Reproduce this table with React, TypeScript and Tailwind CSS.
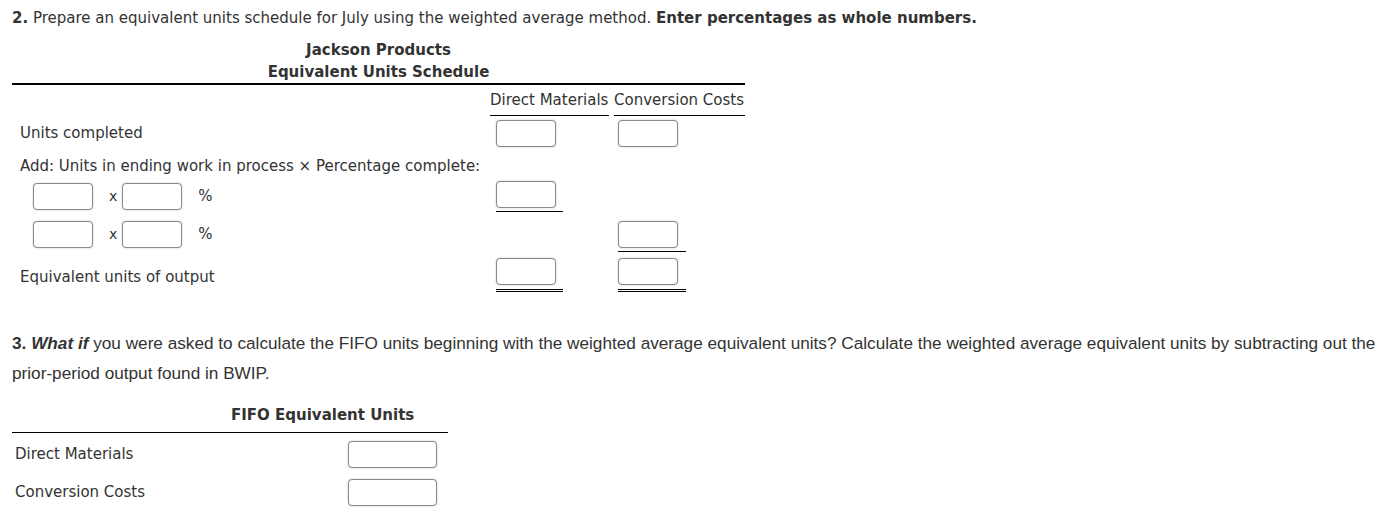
import React from "react";

const Box: React.FC<{ w?: string }> = ({ w = "w-[60px]" }) => (
  <input
    type="text"
    className={`${w} h-[27px] rounded-[4px] border border-[#8a8a8a] bg-white shadow-[0_0_2px_rgba(0,0,0,0.25)] outline-none`}
  />
);

const App: React.FC = () => {
  const verdana = "font-['DejaVu_Sans',Verdana,sans-serif]";
  return (
    <div className={`bg-white text-[#333] ${verdana} text-[15px] min-h-screen pl-3 pt-[9px]`}>
      <p className="leading-[18px]">
        <b>2.</b> Prepare an equivalent units schedule for July using the weighted average method.{" "}
        <b>Enter percentages as whole numbers.</b>
      </p>

      <div className="w-[733px] mt-[12px]">
        <div className="border-b-2 border-black text-center font-bold leading-[22px]">
          <div>Jackson Products</div>
          <div>Equivalent Units Schedule</div>
        </div>

        <div className="flex h-[31px] whitespace-nowrap">
          <div className="w-[478px]" />
          <div className="w-[119px] flex items-center border-b border-black">Direct Materials</div>
          <div className="w-[5px]" />
          <div className="w-[131px] flex items-center border-b border-black">Conversion Costs</div>
        </div>

        <div className="flex h-[35px] items-center">
          <div className="w-[484px] pl-2">Units completed</div>
          <div className="w-[122px]"><Box /></div>
          <Box />
        </div>

        <div className="flex h-[30px] items-center">
          <div className="pl-2">Add: Units in ending work in process × Percentage complete:</div>
        </div>

        <div className="flex h-[36px] items-start">
          <div className="w-[484px] flex items-center pl-[21px] pt-[2px]">
            <Box />
            <span className="ml-[16px] mr-[5px] text-[14px]">x</span>
            <Box />
            <span className="ml-[16px]">%</span>
          </div>
          <div className="w-[67px] border-b border-black pb-[3px]"><Box /></div>
        </div>

        <div className="flex h-[37px] items-start pt-[4px]">
          <div className="w-[484px] flex items-center pl-[21px]">
            <Box />
            <span className="ml-[16px] mr-[5px] text-[14px]">x</span>
            <Box />
            <span className="ml-[16px]">%</span>
          </div>
          <div className="w-[122px]" />
          <div className="w-[68px] border-b border-black pb-[3px]"><Box /></div>
        </div>

        <div className="flex items-start pt-[4px]">
          <div className="w-[484px] pl-2 pt-[8px]">Equivalent units of output</div>
          <div className="w-[67px] border-b-[3px] border-double border-black pb-[4px]"><Box /></div>
          <div className="w-[55px]" />
          <div className="w-[68px] border-b-[3px] border-double border-black pb-[4px]"><Box /></div>
        </div>
      </div>

      <p className="font-['Liberation_Sans',Arial,sans-serif] text-[17.2px] leading-[30px] mt-[36px] pr-2">
        <b>3.</b>{" "}
        <b className="italic">What if</b> you were asked to calculate the FIFO units beginning with the weighted
        average equivalent units? Calculate the weighted average equivalent units by subtracting out the prior-period
        output found in BWIP.
      </p>

      <div className="w-[436px] mt-[18px]">
        <div className="font-bold pl-[219px] pb-[8px] border-b border-black leading-[18px]">FIFO Equivalent Units</div>
        <div className="flex items-center h-[38px] mt-[2px]">
          <div className="w-[336px] pl-[3px]">Direct Materials</div>
          <Box w="w-[89px]" />
        </div>
        <div className="flex items-center h-[38px]">
          <div className="w-[336px] pl-[3px]">Conversion Costs</div>
          <Box w="w-[89px]" />
        </div>
      </div>
    </div>
  );
};

export default App;
